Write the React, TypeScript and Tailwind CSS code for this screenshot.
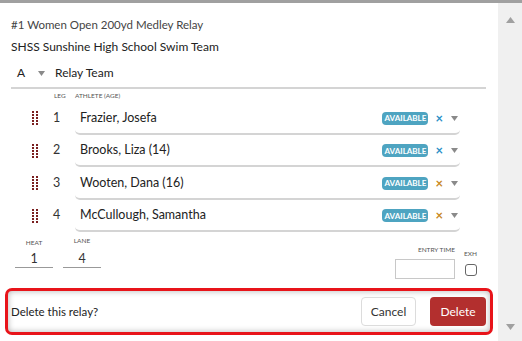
const legs = [
  { leg: 1, name: 'Frazier, Josefa', x: 'text-[#2a8fc7]' },
  { leg: 2, name: 'Brooks, Liza (14)', x: 'text-[#2a8fc7]' },
  { leg: 3, name: 'Wooten, Dana (16)', x: 'text-[#c8871e]' },
  { leg: 4, name: 'McCullough, Samantha', x: 'text-[#c8871e]' },
];

const Caret = ({ className = '' }: { className?: string }) => (
  <svg width="7" height="5" viewBox="0 0 7 5" className={className}>
    <path d="M0 0 H7 L3.5 5 Z" fill="#8a8a8a" />
  </svg>
);

const Handle = () => (
  <svg width="6" height="14" viewBox="0 0 6 14">
    {[0, 3, 6, 9, 12].map((y) =>
      [0, 4].map((x) => <rect key={`${x}-${y}`} x={x} y={y} width="2" height="2" fill="#7a1f1f" />)
    )}
  </svg>
);

const App = () => {
  return (
    <div className="flex h-[341px] w-[522px] flex-col overflow-hidden bg-white font-['Lato',sans-serif] text-[#333]">
      <div className="h-[3px] bg-[#a0a0a0]" />
      <div className="flex flex-1">
        <div className="flex-1 pl-[11px]">
          <div className="mt-[14px] text-[11.5px] leading-[16px] text-[#444]">#1 Women Open 200yd Medley Relay</div>
          <div className="mt-[6px] text-[12px] leading-[16px] text-[#222]">SHSS Sunshine High School Swim Team</div>

          <div className="mr-[12px] mt-[10px] flex items-center border-b-2 border-[#d4d4d4] pb-[6px] text-[12px] leading-[16px] text-[#222]">
            <span className="ml-[6px] w-[21px]">A</span>
            <Caret className="mt-[1px]" />
            <span className="ml-[10px]">Relay Team</span>
          </div>

          <div className="mt-[3px] flex text-[6.5px] uppercase leading-[8px] text-[#555]">
            <span className="ml-[43px] w-[21px]">Leg</span>
            <span>Athlete (Age)</span>
          </div>

          <div className="mt-[2px]">
            {legs.map((l) => (
              <div key={l.leg} className="flex h-[32.5px] items-center">
                <div className="ml-[21px] flex w-[6px]">
                  <Handle />
                </div>
                <div className="w-[37px] text-center text-[12.5px]">{l.leg}</div>
                <div className="flex h-full w-[385px] items-center rounded-b-[5px] border-b-2 border-[#d4d4d4] pl-[5px] pr-[2px] pt-[2px] text-[12.5px] text-[#222]">
                  <span>{l.name}</span>
                  <span className="ml-auto flex h-[13px] w-[46px] items-center justify-center rounded-[4px] bg-[#4ea4c1] text-[8px] font-bold text-white">
                    AVAILABLE
                  </span>
                  <span className={`ml-[7px] text-[13px] font-bold leading-none ${l.x}`}>×</span>
                  <Caret className="ml-[8px]" />
                </div>
              </div>
            ))}
          </div>

          <div className="mr-[21px] flex h-[56px] items-start">
            <div className="ml-[4px] mt-[7px] flex w-[38px] flex-col items-center">
              <span className="text-[6.5px] uppercase leading-[8px] text-[#555]">Heat</span>
              <span className="mt-[4px] w-full border-b border-[#999] text-center text-[12.5px] leading-[16px]">1</span>
            </div>
            <div className="ml-[10px] mt-[5px] flex w-[38px] flex-col items-center">
              <span className="text-[6.5px] uppercase leading-[8px] text-[#555]">Lane</span>
              <span className="mt-[6px] w-full border-b border-[#999] text-center text-[12.5px] leading-[16px]">4</span>
            </div>
            <div className="ml-auto mt-[14px] flex flex-col items-end">
              <span className="text-[6.5px] uppercase leading-[8px] text-[#555]">Entry Time</span>
              <div className="mt-[5px] h-[20px] w-[60px] border border-[#c8c8c8] bg-white" />
            </div>
            <div className="ml-[9px] mt-[18px] flex flex-col items-center">
              <span className="text-[6.5px] uppercase leading-[8px] text-[#555]">Exh</span>
              <div className="mt-[6px] h-[12px] w-[12px] rounded-[3px] border border-[#666]" />
            </div>
          </div>

          <div className="-ml-[6px] mr-[5px] flex h-[47px] items-center rounded-[7px] border-[3px] border-[#e8141a] pl-[3px] pr-[4px] shadow-[inset_0_0_6px_rgba(0,0,0,0.3)]">
            <span className="text-[11.5px] text-[#222]">Delete this relay?</span>
            <button className="ml-auto h-[29px] w-[55px] rounded-[4px] border border-[#dcdcdc] bg-white text-[12px] text-[#333]">
              Cancel
            </button>
            <button className="ml-[14px] h-[29px] w-[56px] rounded-[4px] bg-[#b32f2e] text-[12px] text-white">
              Delete
            </button>
          </div>
        </div>

        <div className="flex w-[24px] flex-col items-center justify-between bg-[#f0f0f0] pb-[11px] pt-[14px]">
          <svg width="9" height="6" viewBox="0 0 9 6">
            <path d="M0 6 L4.5 0 L9 6 Z" fill="#a0a0a0" />
          </svg>
          <svg width="9" height="6" viewBox="0 0 9 6">
            <path d="M0 0 L4.5 6 L9 0 Z" fill="#a0a0a0" />
          </svg>
        </div>
      </div>
    </div>
  );
};

export default App;
